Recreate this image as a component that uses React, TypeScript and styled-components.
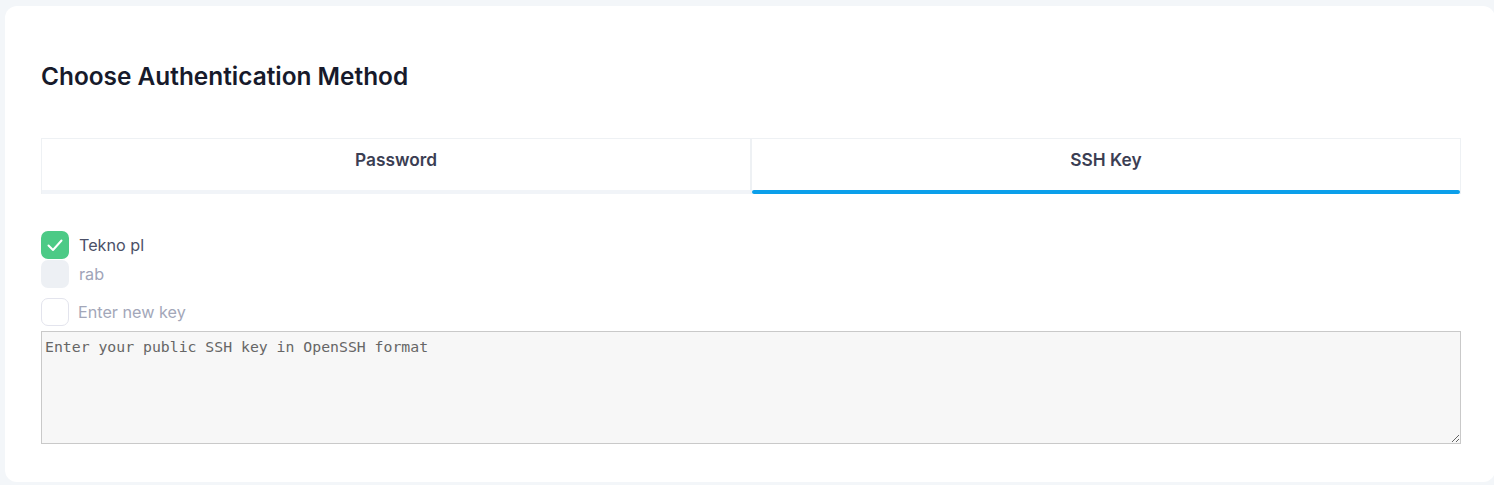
import { useState } from "react";
import styled, { createGlobalStyle } from "styled-components";

const GlobalStyle = createGlobalStyle`
    body {
        margin: 0;
        background-color: #f3f6f9;
        font-family: Inter, "Noto Sans", sans-serif;
    }
`;

const Card = styled.div`
    margin: 6px 0 0 5px;
    width: 1490px;
    height: 476px;
    box-sizing: border-box;
    padding: 56px 34px 0 36px;
    background-color: #ffffff;
    border-radius: 12px;
`;

const Heading = styled.h2`
    margin: 0;
    font-size: 24.4px;
    line-height: 28px;
    font-weight: 600;
    color: #171a2b;
`;

const TabRow = styled.div`
    display: flex;
    margin-top: 48px;
`;

const TabButton = styled.button`
    flex: 1;
    display: flex;
    flex-direction: column;
    height: 56px;
    padding: 0;
    background-color: #ffffff;
    border: 1px solid #eef1f4;
    border-bottom: 0;
    font-family: inherit;
    cursor: pointer;
`;

const TabLabel = styled.span`
    flex: 1;
    padding-top: 10px;
    font-size: 17.3px;
    line-height: 22px;
    font-weight: 600;
    color: #3b3e53;
`;

const TabBar = styled.span<{$active: boolean}>`
    height: 4px;
    border-radius: ${props => props.$active ? '2px' : '0'};
    background-color: ${props => props.$active ? '#0b9fea' : '#f1f4f8'};
`;

const KeyList = styled.div`
    display: flex;
    flex-direction: column;
    margin-top: 37px;
`;

const KeyRow = styled.label<{$gap: number}>`
    display: flex;
    align-items: center;
    gap: 10px;
    height: 28px;
    margin-top: ${props => props.$gap}px;
    cursor: pointer;
`;

const Box = styled.span<{$variant: 'checked' | 'muted' | 'empty'}>`
    display: flex;
    align-items: center;
    justify-content: center;
    width: 28px;
    height: 28px;
    box-sizing: border-box;
    border-radius: 7px;
    background-color: ${props => props.$variant === 'checked' ? '#4cca86' : props.$variant === 'muted' ? '#edf0f4' : '#ffffff'};
    border: ${props => props.$variant === 'empty' ? '1px solid #e3e4ed' : '0'};
`;

const KeyName = styled.span<{$muted?: boolean}>`
    font-size: 16.2px;
    color: ${props => props.$muted ? '#a0a4b8' : '#4b5068'};
`;

const NewKeyInput = styled.input`
    flex: 1;
    border: 0;
    outline: none;
    padding: 0;
    margin-left: -1px;
    font-family: inherit;
    font-size: 16.2px;
    color: #4b5068;
    background: transparent;

    &::placeholder {
        color: #a3a7b9;
    }
`;

const KeyArea = styled.textarea`
    display: block;
    margin-top: 5px;
    width: 1420px;
    height: 113px;
    box-sizing: border-box;
    padding: 6px 3px 4px;
    background-color: #f7f7f7;
    border: 1px solid #c9c9c9;
    border-radius: 0;
    font-family: "DejaVu Sans Mono", "Liberation Mono", monospace;
    font-size: 14.8px;
    color: #555;

    &::placeholder {
        color: #666666;
    }
`;

function CheckIcon() {
    return (
        <svg width="28" height="28" viewBox="0 0 28 28" fill="none">
            <polyline points="7.5,14.5 12,19 20.5,9.5" stroke="#ffffff" strokeWidth="2" strokeLinecap="round" strokeLinejoin="round" />
        </svg>
    );
}

export default function App() {
    const [tab, setTab] = useState<'password' | 'ssh'>('ssh');

    return (
        <>
            <GlobalStyle />
            <Card>
                <Heading>Choose Authentication Method</Heading>
                <TabRow>
                    <TabButton onClick={() => setTab('password')}>
                        <TabLabel>Password</TabLabel>
                        <TabBar $active={tab === 'password'} />
                    </TabButton>
                    <TabButton onClick={() => setTab('ssh')}>
                        <TabLabel>SSH Key</TabLabel>
                        <TabBar $active={tab === 'ssh'} />
                    </TabButton>
                </TabRow>
                <KeyList>
                    <KeyRow $gap={0}>
                        <Box $variant="checked"><CheckIcon /></Box>
                        <KeyName>Tekno pl</KeyName>
                    </KeyRow>
                    <KeyRow $gap={1}>
                        <Box $variant="muted" />
                        <KeyName $muted>rab</KeyName>
                    </KeyRow>
                    <KeyRow $gap={10}>
                        <Box $variant="empty" />
                        <NewKeyInput placeholder="Enter new key" />
                    </KeyRow>
                </KeyList>
                <KeyArea placeholder="Enter your public SSH key in OpenSSH format" />
            </Card>
        </>
    );
}
